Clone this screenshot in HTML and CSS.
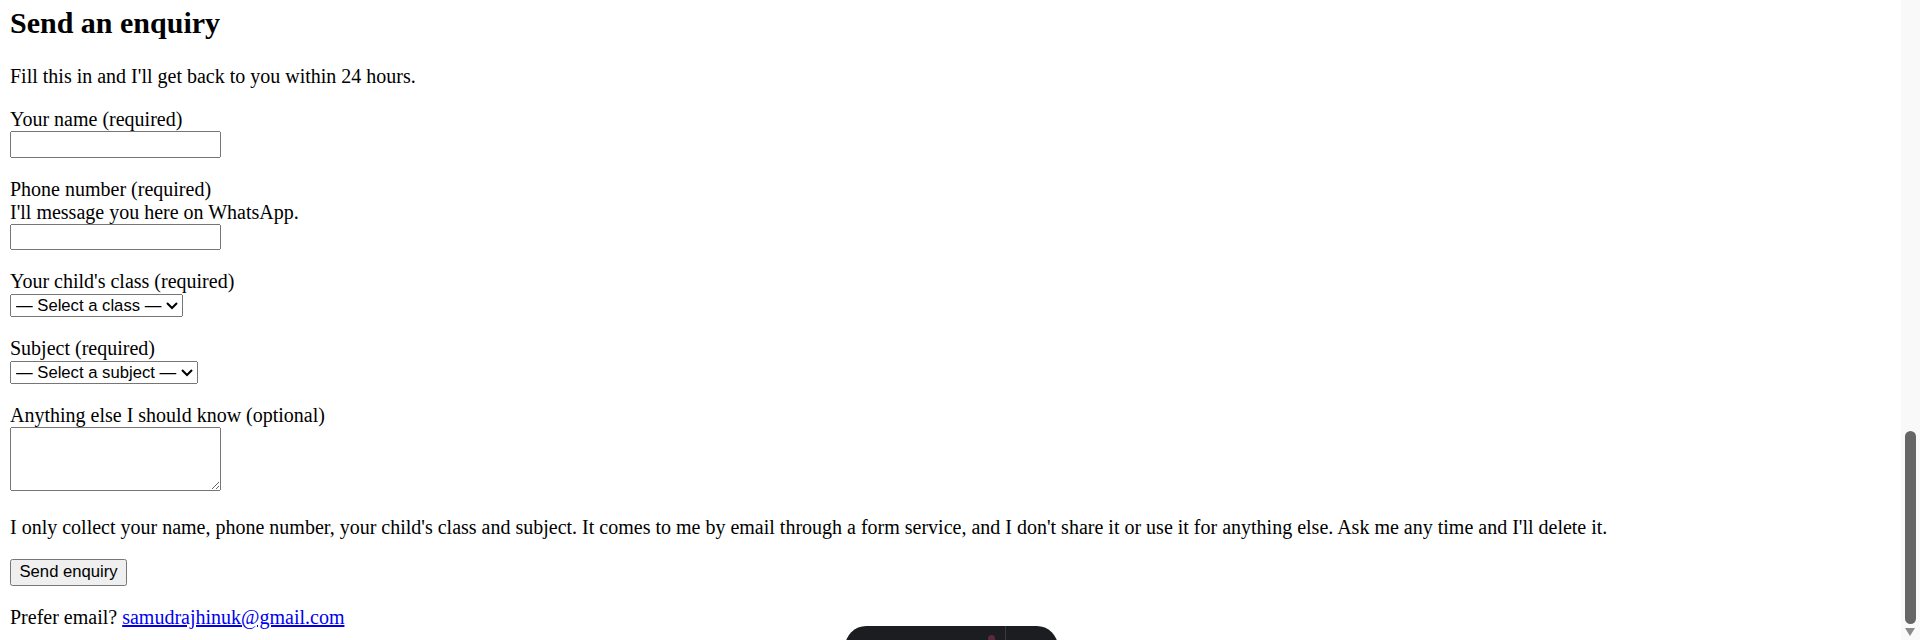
FILE: index.html
```html
<!DOCTYPE html>
<html lang="en">
<head>
<meta charset="utf-8">
<title>Send an enquiry</title>
<link rel="stylesheet" href="styles.css">
</head>
<body>
<main class="page">
  <h2 class="title">Send an enquiry</h2>
  <p>Fill this in and I'll get back to you within 24 hours.</p>
  <form class="enquiry" action="#" onsubmit="return false;">
    <p><label for="name">Your name (required)</label><br><input id="name" class="field" type="text"></p>
    <p><label for="phone">Phone number (required)</label><br><span class="hint">I'll message you here on WhatsApp.</span><br><input id="phone" class="field" type="tel"></p>
    <p><label for="cls">Your child's class (required)</label><br><select id="cls" class="pick"><option>— Select a class —</option></select></p>
    <p><label for="subj">Subject (required)</label><br><select id="subj" class="pick"><option>— Select a subject —</option></select></p>
    <p><label for="msg">Anything else I should know (optional)</label><br><textarea id="msg" class="area" rows="3"></textarea></p>
    <p>I only collect your name, phone number, your child's class and subject. It comes to me by email through a form service, and I don't share it or use it for anything else. Ask me any time and I'll delete it.</p>
    <p><button class="send" type="submit">Send enquiry</button></p>
  </form>
  <p>Prefer email? <a href="mailto:samudrajhinuk@gmail.com">samudrajhinuk@gmail.com</a></p>
</main>
<div class="pill"><span class="pill-dot"></span><span class="pill-sep"></span></div>
<div class="scrollbar"><div class="thumb"></div><div class="arrow"></div></div>
</body>
</html>
```

FILE: styles.css
```css
html {
  zoom: 1.25;
  overflow: hidden;
  background: #fff;
}
body {
  margin: 0;
  padding: 0 8px;
  font-family: "Liberation Serif", "Times New Roman", serif;
  font-size: 16px;
  color: #000;
}
.page {
  padding-top: 5px;
}
.title {
  font-size: 24px;
  font-weight: bold;
  margin: 0 0 19.92px;
}
p {
  margin: 16px 0;
}
.field {
  box-sizing: border-box;
  width: 169px;
  font-family: "Liberation Sans", Arial, sans-serif;
  font-size: 13.333px;
}
.pick {
  font-family: "Liberation Sans", Arial, sans-serif;
  font-size: 13.333px;
}
.area {
  box-sizing: border-box;
  width: 169px;
  font-family: "Liberation Mono", monospace;
  font-size: 13.333px;
}
.send {
  font-family: "Liberation Sans", Arial, sans-serif;
  font-size: 13.333px;
}
a {
  color: #0000ee;
}
.pill {
  position: fixed;
  left: 676px;
  top: 501px;
  width: 170px;
  height: 40px;
  background: #1c1d21;
  border-radius: 17px;
}
.pill-sep {
  position: absolute;
  left: 128px;
  top: 0;
  width: 1px;
  height: 40px;
  background: #3a3b40;
}
.pill-dot {
  position: absolute;
  left: 114px;
  top: 7px;
  width: 6px;
  height: 6px;
  border-radius: 50%;
  background: #5a2a3a;
}
.scrollbar {
  position: fixed;
  right: 0;
  top: 0;
  width: 15px;
  height: 100%;
  background: #f9f9f9;
}
.thumb {
  position: absolute;
  right: 3px;
  top: 345px;
  width: 9px;
  height: 154px;
  border-radius: 5px;
  background: #666;
}
.arrow {
  position: absolute;
  left: 3px;
  top: 502px;
  width: 0;
  height: 0;
  border-left: 4.5px solid transparent;
  border-right: 4.5px solid transparent;
  border-top: 7px solid #8a8a8a;
}
```
